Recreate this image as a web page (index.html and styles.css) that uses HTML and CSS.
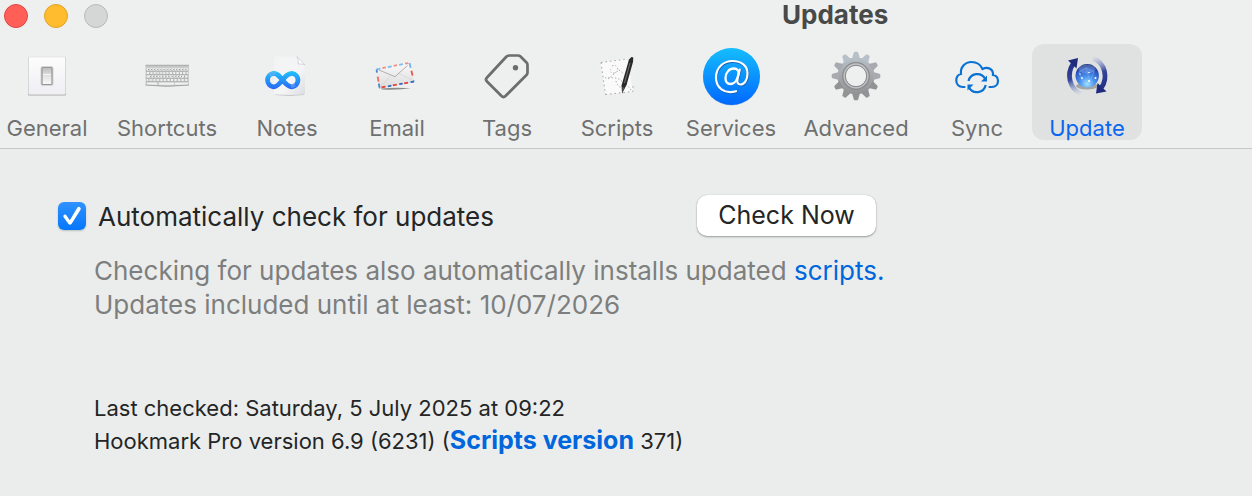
FILE: index.html
```html
<!DOCTYPE html>
<html lang="en">
<head>
<meta charset="utf-8">
<title>Updates</title>
<link rel="stylesheet" href="styles.css">
</head>
<body>
<header class="toolbar">
  <div class="titlebar">
    <div class="lights">
      <button class="light close" aria-label="Close"></button>
      <button class="light minimize" aria-label="Minimize"></button>
      <button class="light zoom" aria-label="Zoom" disabled></button>
    </div>
    <h1 class="title">Updates</h1>
  </div>
  <nav class="tabs">
    <button class="tab">
      <svg class="icon" viewBox="0 0 64 64">
        <defs>
          <linearGradient id="plate" x2="0" y2="1"><stop stop-color="#fdfdfd"/><stop offset="1" stop-color="#eeeef3"/></linearGradient>
          <linearGradient id="rocker" x2="0" y2="1"><stop stop-color="#bcbcbc"/><stop offset=".5" stop-color="#e2e2e2"/><stop offset="1" stop-color="#fafafa"/></linearGradient>
        </defs>
        <rect x="13" y="13" width="38" height="38.5" rx="1" fill="#a9aaac"/>
        <rect x="13.5" y="13" width="37" height="37.5" rx="1" fill="url(#plate)" stroke="#dcdcde" stroke-width=".6"/>
        <rect x="25.500" y="22" width="13" height="20" rx="2" fill="#d6d6d8"/>
        <rect x="27" y="23.500" width="10" height="17" rx="1" fill="url(#rocker)" stroke="#979798" stroke-width="1.200"/>
        <path d="M28 30.500h8" stroke="#f5f5f5"/>
      </svg>
      <span>General</span>
    </button>
    <button class="tab tab-shortcuts">
      <svg class="icon" viewBox="0 0 64 64">
        <path d="M10.500 21H54V41q-22 2.600-43.500 0Z" fill="#cbcccc"/>
        <path d="M10.500 21.500H54" stroke="#b0b1b1" stroke-width="1.500"/>
        <g stroke="#f1f1f1" stroke-width="2.300" fill="none">
          <path d="M12 25.500h41" stroke-dasharray="2.300 .8"/>
          <path d="M12 29h41" stroke-dasharray="3.300 .8 2.300 .8"/>
          <path d="M12 32.500h41" stroke-dasharray="4 .8 2.300 .8 2.300 .8"/>
          <path d="M12 36h41" stroke-dasharray="2.600 .8"/>
          <path d="M12 39.500h10M24 39.500h15M40 39.500h13" stroke-dasharray="15 .8"/>
        </g>
        <g stroke="#8e8f8f" stroke-width=".9" fill="none">
          <path d="M13 25.500h40" stroke-dasharray="1 2.100"/>
          <path d="M14 29h38" stroke-dasharray="1.100 2.200"/>
          <path d="M15 32.500h36" stroke-dasharray="1 2.100"/>
          <path d="M13 36h40" stroke-dasharray="1.200 2.400"/>
          <path d="M11 27.200h42M11 30.700h42M11 34.200h42M11 37.800h42" stroke-width=".6"/>
        </g>
        <path d="M10.500 41q21.500 2.600 43.500 0" stroke="#a2a3a3" fill="none"/>
      </svg>
      <span>Shortcuts</span>
    </button>
    <button class="tab">
      <svg class="icon" viewBox="0 0 64 64">
        <defs>
          <linearGradient id="page" x2="1" y2="1"><stop stop-color="#f2f3f3"/><stop offset=".6" stop-color="#f5f5f7"/><stop offset="1" stop-color="#dcdde1"/></linearGradient>
          <linearGradient id="loop" x1="0" y1="27" x2="0" y2="45" gradientUnits="userSpaceOnUse"><stop stop-color="#22c4fa"/><stop offset="1" stop-color="#2867f5"/></linearGradient>
        </defs>
        <path d="M20 50.500q15 2 29 0" stroke="#c3c4c6" fill="none"/>
        <path d="M19 12.500H42L50 21V50.500H19Z" fill="url(#page)"/>
        <path d="M42 12.500q2 4 1.200 7.500 4-.5 6.800 1Z" fill="#fff" stroke="#cbccd0" stroke-width=".8"/>
        <path d="M27.500 36C24 31.500 22 29.300 18.500 29.300a6.800 6.800 0 0 0 0 13.500C26 42.800 28.500 29.300 37 29.300a6.800 6.800 0 0 1 0 13.500C33.500 42.800 31 40.500 27.500 36Z" fill="none" stroke="url(#loop)" stroke-width="4.800"/>
        <path d="M14 31.200q3-2.500 6.500-1.500M36 42.500l4-1.500" stroke="#7ba7f2" stroke-width="3.500" fill="none" opacity=".5"/>
      </svg>
      <span>Notes</span>
    </button>
    <button class="tab">
      <svg class="icon" viewBox="0 0 64 64">
        <defs><linearGradient id="paper" x2="0" y2="1"><stop stop-color="#fafafa"/><stop offset="1" stop-color="#dcdcdc"/></linearGradient></defs>
        <path d="M16 44.500q14-1.500 30-.3-12 2-29 1.300Z" fill="#8a8a8a"/>
        <path d="M10.500 25 45 18 49.500 38 14 44.500Z" fill="url(#paper)"/>
        <g fill="none" stroke-width="1.800">
          <path d="M11.500 25.300 44.500 18.800" stroke="#f09080" stroke-dasharray="3.500 8" stroke-dashoffset="-6"/>
          <path d="M11.500 25.300 44.500 18.800" stroke="#7fbdf0" stroke-dasharray="4 7.500"/>
          <path d="M44.500 19 49 37.500" stroke="#e8574c" stroke-dasharray="5 8" stroke-dashoffset="-8"/>
          <path d="M44.500 19 49 37.500" stroke="#6cb2ee" stroke-dasharray="5 13"/>
          <path d="M49 37.500 14.500 43.800" stroke="#3468bd" stroke-dasharray="3.500 8"/>
          <path d="M49 37.500 14.500 43.800" stroke="#e5403a" stroke-dasharray="4 7.500" stroke-dashoffset="-6"/>
          <path d="M14.500 43.500 11.500 25.500" stroke="#ee6e61" stroke-dasharray="5 13" stroke-dashoffset="-6"/>
          <path d="M14.500 43.500 11.500 25.500" stroke="#4d86cf" stroke-dasharray="4 11"/>
        </g>
        <path d="M16 42 26 31.500M47 36 34 29.500" fill="none" stroke="#d3d3d3" stroke-width=".7"/>
        <path d="M14 26 30 32.700 42.500 21.500" fill="none" stroke="#b0b0b0"/>
      </svg>
      <span>Email</span>
    </button>
    <button class="tab">
      <svg class="icon" viewBox="0 0 64 64">
        <path d="M31.500 12.500Q33 11.500 34.500 11.500H43Q44.500 11.500 45.500 12.500L51.500 18.500Q52.500 19.500 52.500 21V28.500Q52.500 30 51.500 31L30.500 52Q28.500 54 26.500 52L12 37.500Q10 35.500 12 33.500Z" fill="none" stroke="#6c6d6d" stroke-width="2.700" stroke-linejoin="round"/>
        <circle cx="40.500" cy="23.700" r="2.700" fill="#6c6d6d"/>
      </svg>
      <span>Tags</span>
    </button>
    <button class="tab">
      <svg class="icon" viewBox="0 0 64 64">
        <path d="M15.500 18.500 42 14.500 48 47.500 20.500 50.500Z" fill="#fafafa"/>
        <g fill="none" stroke="#999" stroke-width=".9">
          <path d="M16 18.500 42 15M16 18.500 20.500 50.500M20.500 50.500 48 47.500V42" stroke-dasharray="1.500 3"/>
          <path d="M27 22q4-2 5.500 2t-3 5-4-4M20 34q8-1 14 1l4 3M23 35q5-4 10-9M31 37q1 5 6 7M34 26l5 4M41 40l6 7" stroke-dasharray="1.300 2"/>
        </g>
        <path d="M44 15.500 46.500 13 48.300 13.500 48 18 41.500 41 37 49.500 36.500 41.500Z" fill="#29292b"/>
        <path d="M45 19 39.500 39" stroke="#777" stroke-width=".9"/>
        <path d="m37.300 43 2.500.7L37 49.500Z" fill="#555"/>
      </svg>
      <span>Scripts</span>
    </button>
    <button class="tab tab-services">
      <svg class="icon" viewBox="0 0 64 64">
        <defs><linearGradient id="disc" x2="0" y2="1"><stop stop-color="#15bdfd"/><stop offset="1" stop-color="#0068ff"/></linearGradient></defs>
        <circle cx="32.500" cy="33" r="28.500" fill="#b9c6d6"/>
        <circle cx="32.500" cy="32.500" r="28.500" fill="url(#disc)"/>
        <g fill="none" stroke-linecap="round" stroke-linejoin="round">
          <path d="M37 47.200C25 50.500 17 43.500 17 33.500 17 23.500 24.500 17 33.500 17 42.500 17 48.500 22 48.500 29.500 48.500 36.500 45 40.500 41.500 40.500 38.500 40.500 37.800 38 38.500 35L40.800 25.500" stroke="#1264bb" stroke-width="2.600" transform="translate(.4 .8)"/>
          <path d="M37 47.200C25 50.500 17 43.500 17 33.500 17 23.500 24.500 17 33.500 17 42.500 17 48.500 22 48.500 29.500 48.500 36.500 45 40.500 41.500 40.500 38.500 40.500 37.800 38 38.500 35L40.800 25.500" stroke="#fff" stroke-width="2.200"/>
          <path d="M39.500 30C40 26.500 38 24.500 35 24.500 30 24.500 26.500 29 26.500 34 26.500 38 28.500 40 31.500 40 35.500 40 38.500 35.500 39.500 30Z" stroke="#fff" stroke-width="2.300"/>
        </g>
      </svg>
      <span>Services</span>
    </button>
    <button class="tab tab-advanced">
      <svg class="icon" viewBox="0 0 64 64">
        <defs>
          <linearGradient id="steel" x1="0" y1="8" x2="0" y2="56" gradientUnits="userSpaceOnUse"><stop stop-color="#bdc7d0"/><stop offset=".5" stop-color="#a4a7aa"/><stop offset="1" stop-color="#8d8e90"/></linearGradient>
          <path id="tooth" d="M28 15 29.800 8.600Q30 7.700 31 7.700H33Q34 7.700 34.200 8.600L36 15Z"/>
        </defs>
        <circle cx="32" cy="32" r="14.500" fill="none" stroke="url(#steel)" stroke-width="8"/>
        <g fill="#b7c0c8"><use href="#tooth"/><use href="#tooth" transform="rotate(30 32 32)"/><use href="#tooth" transform="rotate(330 32 32)"/></g>
        <g fill="#a7abaf"><use href="#tooth" transform="rotate(60 32 32)"/><use href="#tooth" transform="rotate(90 32 32)"/><use href="#tooth" transform="rotate(270 32 32)"/><use href="#tooth" transform="rotate(300 32 32)"/></g>
        <g fill="#929395"><use href="#tooth" transform="rotate(120 32 32)"/><use href="#tooth" transform="rotate(150 32 32)"/><use href="#tooth" transform="rotate(180 32 32)"/><use href="#tooth" transform="rotate(210 32 32)"/><use href="#tooth" transform="rotate(240 32 32)"/></g>
        <circle cx="32" cy="32" r="13.300" fill="none" stroke="#8a8c8e" stroke-width="1.300"/>
        <circle cx="32" cy="32" r="11.700" fill="none" stroke="#c0c1c2" stroke-width="1.500"/>
        <circle cx="32" cy="32" r="10.700" fill="none" stroke="#818284" stroke-width=".9"/>
      </svg>
      <span>Advanced</span>
    </button>
    <button class="tab">
      <svg class="icon" viewBox="0 0 64 64">
        <g fill="none" stroke="#0b72d5" stroke-width="2.200">
          <path d="M19.500 43H18C13.500 43 11.300 40 11.300 36.500 11.300 33 13.500 30.500 16 30 15 23.500 20 18 26.500 18 31.500 18 35.500 20.500 37.500 25 43 22 48.500 25.500 48 31 51 31.500 53 34 53 37 53 40.500 50.500 43 47 43H44.500" stroke-linecap="round"/>
          <path d="M23.500 37A9 9 0 0 1 40 34.500M40.700 41A9 9 0 0 1 24 43.500"/>
        </g>
        <path d="M42 31.500V37.500H36ZM22.500 46.500V40.500H28.500Z" fill="#0b72d5"/>
      </svg>
      <span>Sync</span>
    </button>
    <button class="tab selected" aria-current="page">
      <svg class="icon" viewBox="0 0 64 64">
        <defs>
          <radialGradient id="globe" cx=".5" cy=".85" r=".85"><stop stop-color="#a3e2ff"/><stop offset=".35" stop-color="#4f97f0"/><stop offset=".75" stop-color="#2b55c4"/><stop offset="1" stop-color="#172866"/></radialGradient>
          <linearGradient id="fadeL" x1="12" y1="18" x2="25" y2="51" gradientUnits="userSpaceOnUse"><stop stop-color="#202b7e"/><stop offset=".5" stop-color="#34469c"/><stop offset="1" stop-color="#98aada" stop-opacity="0"/></linearGradient>
          <linearGradient id="fadeR" x1="52" y1="46" x2="38" y2="12" gradientUnits="userSpaceOnUse"><stop stop-color="#202b7e"/><stop offset=".5" stop-color="#34469c"/><stop offset="1" stop-color="#98aada" stop-opacity="0"/></linearGradient>
        </defs>
        <ellipse cx="32" cy="42" rx="11" ry="3.500" fill="#a2a5a6"/>
        <path d="M18 20C11.500 30 14 44 26 50" fill="none" stroke="url(#fadeL)" stroke-width="4.800"/>
        <path d="M13 16.500 23 14 21.500 24.500Z" fill="#202b7e"/>
        <path d="M46.500 43.500C53 34 50.500 19 38 14" fill="none" stroke="url(#fadeR)" stroke-width="4.800"/>
        <path d="M51.500 47.500 41 49.500 42.500 39Z" fill="#202b7e"/>
        <circle cx="32.200" cy="31.700" r="11.700" fill="url(#globe)"/>
        <ellipse cx="32" cy="25" rx="8.500" ry="4.500" fill="#a9c8fa" opacity=".3"/>
        <path d="M24 28l7-4 8 4-4 9-8-1-3-8M31 24l4 13" stroke="#8cc3fa" stroke-width=".4" fill="none"/>
        <g fill="#fff"><circle cx="34" cy="28.500" r=".8"/><circle cx="40.500" cy="34" r="1"/><circle cx="27" cy="34" r=".9"/><circle cx="34" cy="37" r="1"/><circle cx="25" cy="30" r=".7"/></g>
      </svg>
      <span>Update</span>
    </button>
  </nav>
</header>
<main class="panel">
  <div class="auto-row">
    <label class="auto"><input class="check" type="checkbox" checked><span>Automatically check for updates</span></label>
    <button class="check-now">Check Now</button>
  </div>
  <p class="note">Checking for updates also automatically installs updated <a class="link" href="#scripts">scripts.</a><br>Updates included until at least: 10/07/2026</p>
  <p class="info">Last checked: Saturday, 5 July 2025 at 09:22<br>Hookmark Pro version 6.9 (6231) (<a class="link strong" href="#version">Scripts version</a> 371)</p>
</main>
</body>
</html>
```

FILE: styles.css
```css
* { box-sizing: border-box; }
body {
  margin: 0;
  min-height: 100vh;
  background: #ebeded;
  color: #242525;
  font-family: Inter, "Liberation Sans", sans-serif;
  overflow-x: hidden;
}
button { font: inherit; border: 0; padding: 0; }
.toolbar {
  background: #eef0ef;
  border-bottom: 1px solid #c6c8c7;
  padding-bottom: 8px;
}
.titlebar { display: flex; align-items: center; height: 32px; padding-left: 4px; margin-bottom: 12px; }
.lights { display: flex; gap: 16px; width: 778px; }
.light { width: 24px; height: 24px; border-radius: 50%; }
.close { background: #ff5f57; border: 1px solid #e2463f; }
.minimize { background: #febc2e; border: 1px solid #e1a325; }
.zoom { background: #d5d7d6; border: 1px solid #b9bbba; }
.title { margin: 0; padding-bottom: 2px; font-size: 26px; line-height: 30px; font-weight: 700; color: #484949; }
.tabs { display: flex; margin-left: -8px; }
.tab {
  display: flex;
  flex-direction: column;
  align-items: center;
  flex: none;
  width: 110px;
  height: 96px;
  border-radius: 12px;
  background: none;
  color: #6f7070;
  font-size: 22px;
  line-height: 40px;
}
.tab-shortcuts { width: 130px; }
.tab-services { width: 118px; }
.tab-advanced { width: 132px; }
.tab.selected { background: #e0e2e1; color: #0a66f0; }
.icon { width: 64px; height: 64px; flex: none; }
.panel { padding: 46px 24px 40px 58px; }
.auto-row { display: flex; align-items: flex-start; max-width: 818px; justify-content: space-between; }
.auto { display: flex; align-items: center; gap: 12px; font-size: 26px; line-height: 44px; }
.check {
  appearance: none;
  width: 28px;
  height: 28px;
  margin: 0 0 2px;
  border-radius: 6px;
  background: linear-gradient(#2f92ff, #0577fa);
  box-shadow: 0 1px 2px #0003;
  display: grid;
  place-items: center;
}
.check:checked::before {
  content: "";
  width: 20px;
  height: 20px;
  background: #fff;
  clip-path: path("M1.5 11 Q.8 9.5 2.2 8.8 Q3.5 8.2 4.5 9.6 L7.8 14.2 L15.3 1.8 Q16.5 .3 18 1.2 Q19.3 2.2 18.5 3.7 L9.7 17.7 Q8 19.800 6.3 17.8 Z");
}
.check-now {
  width: 179px;
  height: 41px;
  padding-bottom: 2px;
  border-radius: 10px;
  background: #fff;
  color: #242525;
  font-size: 25px;
  line-height: 38px;
  box-shadow: 0 1px 2px #0005, 0 0 1px #0004;
}
.note { margin: 15px 0 0 36px; font-size: 26px; line-height: 34px; color: #7d7f7e; }
.link { color: #0066dc; text-decoration: none; }
.info { margin: 70px 0 0 36px; font-size: 22px; line-height: 32px; }
.strong { font-weight: 700; font-size: 25px; }
```
